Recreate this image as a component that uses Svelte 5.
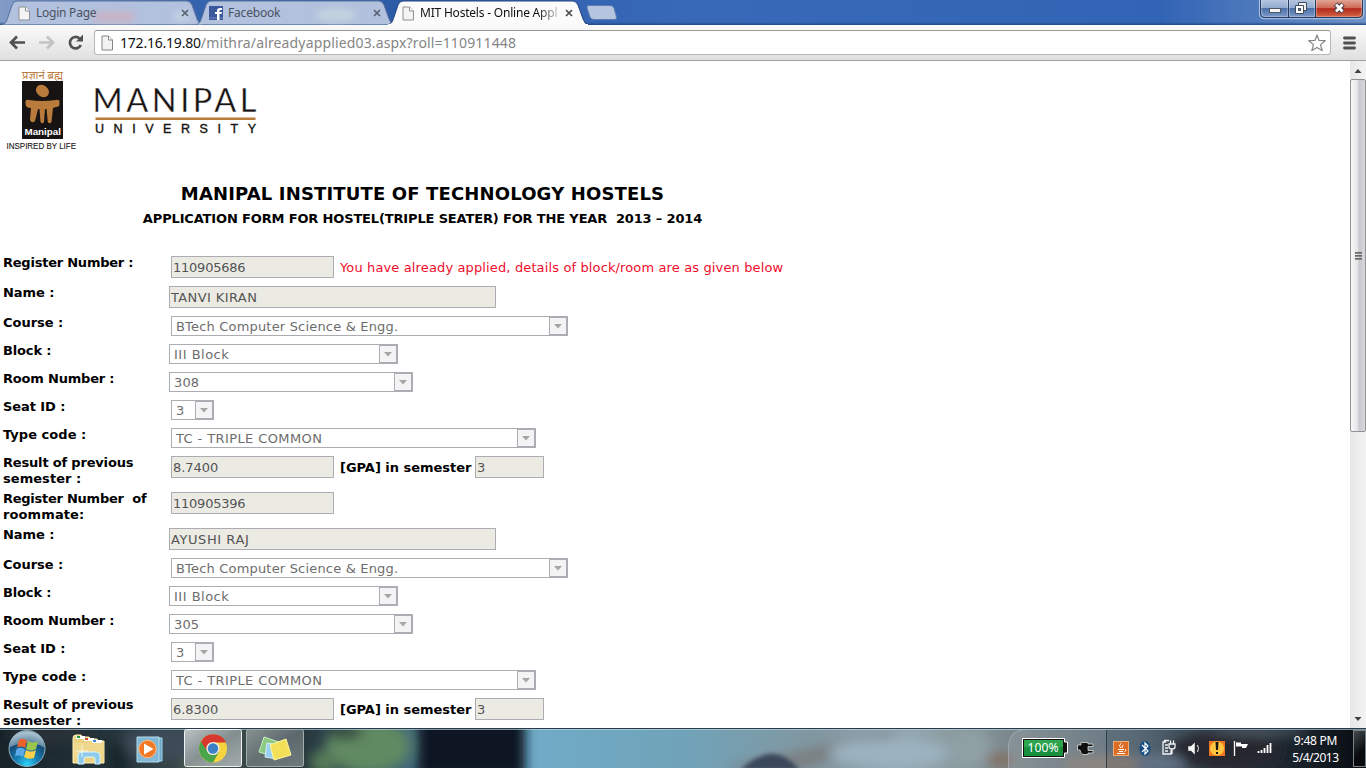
<script>
  const person = (name, room, gpa) => [
    { h: 30, label: [['Name :', 51]], kind: 'input', x: 169, w: 327, value: name[0], tw: name[1] },
    { h: 28, label: [['Course :', 60]], kind: 'select', x: 171, w: 397, value: 'BTech Computer Science & Engg.', tw: 222 },
    { h: 28, label: [['Block :', 48]], kind: 'select', x: 169, w: 229, value: 'III Block', tw: 55 },
    { h: 28, label: [['Room Number :', 111]], kind: 'select', x: 169, w: 244, value: room, tw: 25 },
    { h: 28, label: [['Seat ID :', 62]], kind: 'select', x: 171, w: 43, value: '3', tw: 8 },
    { h: 28, label: [['Type code :', 83]], kind: 'select', x: 171, w: 365, value: 'TC - TRIPLE COMMON', tw: 146 },
    { h: 36, label: [['Result of previous', 130], ['semester :', 78]], kind: 'input', x: 171, w: 163, value: gpa, tw: 45, gpa: true }
  ];
  const rows = [
    { h: 30, label: [['Register Number :', 130]], kind: 'input', x: 171, w: 163, value: '110905686', tw: 72, note: true },
    ...person(['TANVI KIRAN', 86], '308', '8.7400'),
    { h: 36, label: [['Register Number  of', 143], ['roommate:', 81]], kind: 'input', x: 171, w: 163, value: '110905396', tw: 72 },
    ...person(['AYUSHI RAJ', 78], '305', '6.8300')
  ];
  const tabs = [
    { title: 'Login Page', tw: 60, w: 200 },
    { title: 'Facebook', tw: 52, w: 198, fb: true },
    { title: 'MIT Hostels - Online Appl', tw: 137, w: 200, active: true }
  ];
  // Spreads the letters of a line so that it fills the given width.
  function fit(node, width) {
    const n = node.textContent.length;
    const natural = node.getBoundingClientRect().width;
    node.style.letterSpacing = (width + 0.3 - natural) / n + 'px';
  }
</script>

{#snippet page()}
  <svg class="doc" width="13" height="15" viewBox="0 0 13 15"><path d="M1 1H7.500L11.500 5V14H1Z" fill="#f4f4f4" stroke="#909090"/><path d="M7.500 1V5H11.500" fill="#fff" stroke="#909090"/></svg>
{/snippet}

<div class="screen">
  <header class="strip">
    {#each tabs as t}
      <div class="tab" class:active={t.active} class:fb={t.fb} style:width="{t.w}px">
        <svg class="shape" width={t.w} height="25" viewBox="0 0 {t.w} 25">
          <path d="M0 24.500C4 24 4.500 21 6 17L10 5Q11.500 1 15 1H{t.w - 15}Q{t.w - 12} 1 {t.w - 10} 5L{t.w - 5} 19Q{t.w - 3} 24.500 {t.w} 24.500" fill={t.active ? '#fbfbfb' : '#b2c1dd'} stroke={t.active ? '#27467e' : '#5a729d'} />
          {#if t.active}<rect width={t.w} height="2" y="24" fill="#fafafa" />
          {:else if t.fb}<ellipse class="glow" cx="140" cy="15" rx="20" ry="7" fill="#c2d2de" />
          {:else}<g class="glow"><rect x="92" y="12" width="40" height="10" fill="#c9b3c6" /><rect x="172" y="11" width="16" height="10" fill="#c3d2e4" /></g>{/if}
        </svg>
        {#if t.fb}
          <svg class="doc" width="14" height="14" viewBox="0 0 14 14"><rect width="14" height="14" fill="#3a589b"/><path d="M8 14V8H6V6H8V4.500Q8 2 11 2H13V4H11.500Q10.500 4 10.500 5V6H13L12.500 8H10.500V14" fill="#fff"/><path d="M0 12H8M10.500 12H14" stroke="#7188bb"/></svg>
        {:else}{@render page()}{/if}
        <span class="tabtext"><span use:fit={t.tw}>{t.title}</span></span>
        <svg class="close" width="8" height="8" viewBox="0 0 8 8"><path d="M1 1L7 7M7 1L1 7" stroke={t.active ? '#4c4c4c' : '#5a6272'} stroke-width="1.700"/></svg>
      </div>
    {/each}
    <svg class="newtab" width="32" height="15" viewBox="0 0 32 15"><path d="M3 .5H24Q27 .5 28 3L30.500 12Q31 14.500 28.500 14.500H8Q5 14.500 4 12L1 3Q.3 .5 3 .5" fill="#b5c5df" stroke="#5d7cb2"/></svg>
    <svg class="winbtns" width="106" height="20" viewBox="0 0 106 20">
      <defs>
        <linearGradient id="wb" x2="0" y2="1"><stop stop-color="#b8c8e0"/><stop offset=".46" stop-color="#91aad0"/><stop offset=".5" stop-color="#4d70a8"/><stop offset="1" stop-color="#7e9dcc"/></linearGradient>
        <linearGradient id="wr" x2="0" y2="1"><stop stop-color="#e2a394"/><stop offset=".42" stop-color="#cf6b57"/><stop offset=".48" stop-color="#b42a1b"/><stop offset="1" stop-color="#d56a48"/></linearGradient>
      </defs>
      <path d="M1 -1V14Q1 18 5 18H99Q104 18 104 14V-1" fill="url(#wb)"/>
      <path d="M56 0H104V14Q104 18 99 18H56Z" fill="url(#wr)"/>
      <path d="M1.500 0V13Q1.500 17.500 6 17.500H99Q103.500 17.500 103.500 13V0M29.500 0V17M56.500 0V17" fill="none" stroke="#243b64"/>
      <path d="M.5 0V14Q.5 18.700 5 18.700H99Q104.700 18.700 104.700 14V0" fill="none" stroke="#c8d8ee" stroke-width=".8"/>
      <path d="M2.700 0V13Q2.700 16.400 6 16.400H28.400V0M30.600 0V16.400H55.400V0M57.600 0V16.400H99Q102.400 16.400 102.400 13V0" fill="none" stroke="#fff" stroke-opacity=".4" stroke-width=".8"/>
      <rect x="10.500" y="8.500" width="11" height="4" fill="#f5f5f5" stroke="#4f5565"/>
      <path d="M39.500 2.500H47.500V10.500H39.500Z" fill="#eee" stroke="#454c5c"/><path d="M36.500 5.500H44.500V13.500H36.500Z" fill="#fff" stroke="#454c5c"/><rect x="39.500" y="8.500" width="2" height="2" fill="#7797c8" stroke="#454c5c"/>
      <path d="M76.500 4L84 12M84 4L76.500 12" stroke="#54424a" stroke-width="5"/><path d="M77 4.500L83.500 11.500M83.500 4.500L77 11.500" stroke="#fff" stroke-width="2.600"/>
    </svg>
  </header>

  <div class="toolbar">
    <svg width="94" height="35" viewBox="0 0 94 35">
      <g fill="none" stroke-width="2.700"><path d="M11 17.500H25M17 11.500L11 17.500L17 23.500" stroke="#505050"/><path d="M39 17.500H52M47 11.500L53 17.500L47 23.500" stroke="#c3c3c3"/>
      <path d="M79.500 13.500A5.700 5.700 0 1 0 80.800 20" stroke="#505050"/></g><path d="M83 9.500V16.500H76Z" fill="#505050"/>
    </svg>
    <div class="omni">
      <svg width="13" height="16" viewBox="0 0 13 16"><path d="M1 1H7.500L11.500 5V15H1Z" fill="#f3f3f3" stroke="#858585"/><path d="M7.500 1V5H11.500" fill="#fff" stroke="#858585"/></svg>
      <div class="url"><span use:fit={80.500}>172.16.19.80</span><span class="path" use:fit={315}>/mithra/alreadyapplied03.aspx?roll=110911448</span></div>
      <svg class="star" width="18" height="18" viewBox="0 0 18 18"><path d="M9 1L11 6.500L17.200 6.700L12.500 10.600L14.200 16.600L9 13.400L3.800 16.600L5.500 10.600L.8 6.700L7 6.500Z" fill="#fff" stroke="#858585" stroke-width="1.200" stroke-linejoin="round"/></svg>
    </div>
    <svg class="menu" width="13" height="14" viewBox="0 0 13 14"><path d="M1.500 2H11.500M1.500 7H11.500M1.500 12H11.500" stroke="#505050" stroke-width="2.800" stroke-linecap="round"/></svg>
  </div>

  <div class="view">
    <main>
      <svg class="logo" width="270" height="100" viewBox="0 0 270 100">
        <text x="22" y="18" textLength="41" lengthAdjust="spacingAndGlyphs" font-size="11" fill="#b77a3c" font-family="Noto Sans, Noto Sans Devanagari, sans-serif">प्रज्ञानं ब्रह्म</text>
        <rect x="22" y="20" width="41" height="58" fill="#171312"/>
        <g fill="#b97b3c"><ellipse cx="42.500" cy="30" rx="7" ry="5.700" transform="rotate(40 42.500 30)"/>
        <path d="M29 39Q42 41 56 39Q60 38 59.500 42Q60 46 56 46L53 47L51.500 61Q49.500 63.500 47.800 61L46.500 48H45L44 61Q42 63.500 40.500 61L39.500 48H38L35 60Q32 63 30 59L31 47Q25 47 25.500 42Q25 38 29 39"/></g>
        <g font-family="Liberation Sans, Arial, sans-serif" fill="#171312">
          <text x="24.500" y="73.500" textLength="36.500" lengthAdjust="spacingAndGlyphs" font-size="9.500" font-weight="bold" fill="#fff">Manipal</text>
          <text x="6.500" y="87.500" textLength="69.500" lengthAdjust="spacingAndGlyphs" font-size="8.500" stroke="#171312" stroke-width=".1">INSPIRED BY LIFE</text>
          <text x="92.500" y="50.500" textLength="164" font-family="Lato, sans-serif" font-size="32.500" stroke="#fff" stroke-width=".35">MANIPAL</text>
          <rect x="95.500" y="56.500" width="160" height="2.500" fill="#b97b3c"/>
          <text x="95" y="72" textLength="161" font-size="12.500" stroke="#171312" stroke-width=".4">UNIVERSITY</text>
        </g>
      </svg>
      <div class="headings">
        <h1><span use:fit={483}>MANIPAL INSTITUTE OF TECHNOLOGY HOSTELS</span></h1>
        <h2><span use:fit={559}>APPLICATION FORM FOR HOSTEL(TRIPLE SEATER) FOR THE YEAR&nbsp; 2013 – 2014</span></h2>
      </div>
      <form>
        {#each rows as r}
          <div class="row" style:height="{r.h}px">
            <div class="label" style:width="{r.x - 3}px">{#each r.label as l}<div><span use:fit={l[1]}>{l[0]}</span></div>{/each}</div>
            <div class={r.kind} style:width="{r.w}px">
              <span use:fit={r.tw}>{r.value}</span>
              {#if r.kind === 'select'}<i class="arrow"><svg width="8" height="5" viewBox="0 0 8 5"><path d="M0 0H8L4 4.500Z" fill="#a6a6a6"/></svg></i>{/if}
            </div>
            {#if r.note}<div class="note"><span use:fit={443}>You have already applied, details of block/room are as given below</span></div>{/if}
            {#if r.gpa}<div class="gpa"><span use:fit={131}>[GPA] in semester</span></div><div class="input sem">3</div>{/if}
          </div>
        {/each}
      </form>
    </main>
    <div class="scroll">
      <div class="cap"><svg width="8" height="5" viewBox="0 0 8 5"><path d="M0.500 5H7.500L4 1Z" fill="#404040"/></svg></div>
      <div class="thumb"><i></i><i></i><i></i></div>
      <div class="cap bottom"><svg width="8" height="5" viewBox="0 0 8 5"><path d="M0.500 0H7.500L4 4Z" fill="#404040"/></svg></div>
    </div>
  </div>

  <footer>
    <svg class="wall" width="1366" height="40" viewBox="0 0 1366 40" preserveAspectRatio="none">
      <defs>
        <filter id="soft" x="-10%" y="-50%" width="120%" height="200%"><feGaussianBlur stdDeviation="6"/></filter>
        <linearGradient id="sky"><stop stop-color="#172329"/><stop offset=".09" stop-color="#27363d"/><stop offset=".16" stop-color="#42514e"/><stop offset=".22" stop-color="#27363b"/><stop offset=".375" stop-color="#5b9bb9"/><stop offset=".39" stop-color="#70abc7"/><stop offset=".5" stop-color="#70a3b9"/><stop offset=".6" stop-color="#82979f"/><stop offset=".66" stop-color="#95a9b4"/><stop offset=".7" stop-color="#8a9a9d"/><stop offset=".76" stop-color="#738087"/><stop offset=".83" stop-color="#596a76"/><stop offset=".91" stop-color="#27333f"/><stop offset="1" stop-color="#080c11"/></linearGradient>
      </defs>
      <rect width="1366" height="40" fill="url(#sky)"/>
      <g filter="url(#soft)">
        <ellipse cx="368" cy="18" rx="42" ry="27" fill="#608a62"/><ellipse cx="345" cy="4" rx="18" ry="8" fill="#394e42"/><ellipse cx="324" cy="34" rx="14" ry="12" fill="#557a58"/>
        <rect x="418" y="-15" width="107" height="65" fill="#101720"/>
        <ellipse cx="50" cy="5" rx="42" ry="10" fill="#293338"/><ellipse cx="160" cy="16" rx="40" ry="17" fill="#3d4c59"/><ellipse cx="200" cy="38" rx="18" ry="6" fill="#5f715b"/><ellipse cx="118" cy="32" rx="10" ry="20" fill="#15282a"/>
        <path d="M720 40L870 8L910 2L800 42Z" fill="#7c7f82"/><ellipse cx="890" cy="25" rx="60" ry="14" fill="#9bb2c0"/><ellipse cx="970" cy="20" rx="20" ry="20" fill="#8fa0a4"/>
        <ellipse cx="1000" cy="32" rx="14" ry="7" fill="#866e60"/><ellipse cx="1110" cy="36" rx="50" ry="8" fill="#867a73"/><ellipse cx="1225" cy="23" rx="56" ry="19" fill="#25262e"/><ellipse cx="1160" cy="35" rx="25" ry="8" fill="#647489"/><ellipse cx="1260" cy="3" rx="50" ry="4" fill="#54616b"/>
      </g>
      <path d="M740 42Q758 26 772 26Q786 26 800 42" fill="#344156" opacity=".9" style="filter:blur(2px)"/>
      <rect width="1366" height="1" fill="#293a48"/><rect y="1" width="1366" height="1" fill="#c0dce8" opacity=".65"/>
    </svg>
    <svg class="apps" width="310" height="40" viewBox="0 0 310 40">
      <defs><radialGradient id="orb" cx=".5" cy=".95" r=".9"><stop stop-color="#2dd5fa"/><stop offset=".35" stop-color="#1980b5"/><stop offset=".7" stop-color="#154e78"/><stop offset="1" stop-color="#8caabd"/></radialGradient><linearGradient id="btn" x2="1" y2="1"><stop stop-color="#d3d8d8" stop-opacity=".85"/><stop offset=".5" stop-color="#9ba4a7" stop-opacity=".75"/><stop offset="1" stop-color="#c5cdcc" stop-opacity=".75"/></linearGradient></defs>
      <circle cx="27" cy="20.500" r="18" fill="url(#orb)" stroke="#8faebb"/><path d="M10 19Q11 4 27 4Q43 4 44 19Q27 11 10 19" fill="#fff" opacity=".32"/>
      <path d="M19 12Q23 9.500 27 12.500L25 20Q21 17.500 17 19.500Z" fill="#ef612b"/><path d="M28 13Q33 16 38 13L36 21Q31 24 26 21Z" fill="#99c64b"/><path d="M16.500 21Q21 18.500 25 21.500L23 29Q19 26.500 15 28.500Z" fill="#5ca9e8"/><path d="M26 22Q31 25 36 22L34 30Q28 32 24 29Z" fill="#ffd04a"/>
      <path d="M73 35V10Q73 7 76 7H81L83 9H89L91 11H97L98 13H104V35Z" fill="#ecd384" stroke="#fff1b5"/><path d="M76 8H85V11H76M84 10H94V13H84M92 12H102V15H92" fill="#fff"/><path d="M77 8H80V10H77" fill="#219530"/><path d="M85 10H88V12H85" fill="#d34333"/><path d="M93 12H96V14H93" fill="#3589d8"/><path d="M74 15H104V30H74Z" fill="#f0d98d"/><path d="M78 36V28Q78 24 83 24H95Q100 24 100 28V36H95V31Q95 29 93 29H86Q84 29 84 31V36Z" fill="#8ecbea" stroke="#daf4ff"/><path d="M82 17V29M76 23H88" stroke="#fff" opacity=".75"/>
      <path d="M143 10H162V33H143Z" fill="#6ba9c9" stroke="#a8d6ec"/><path d="M137 9H159V34H137Z" fill="#82b7d5" stroke="#b4dded"/><circle cx="147.500" cy="21" r="8.700" fill="#f17925" stroke="#ffbd83"/><path d="M144 15.500V26.500L153.500 21Z" fill="#fff"/>
      <rect x="184.500" y="1.500" width="57" height="37" rx="2" fill="url(#btn)" stroke="#eff3f1"/><rect x="246.500" y="1.500" width="57" height="37" rx="2" fill="url(#btn)" fill-opacity=".6" stroke="#a1afaa"/>
      <circle cx="213" cy="20.500" r="14" fill="#f5d43f"/><path d="M200.900 13.500A14 14 0 0 0 213 34.500L219 24L213 20.500Z" fill="#4aa449"/><path d="M201 13.500A14 14 0 0 1 226 14.500H213Q208 16 207 23Z" fill="#d8382e"/><circle cx="213" cy="20.500" r="6.600" fill="#f0f0e7"/><circle cx="213" cy="20.500" r="5.200" fill="#3c80c5"/>
      <path d="M264 9L279 14L275 29L259 24Z" fill="#8bc982" stroke="#c6ebbc"/><path d="M267 15L279 17L277 31L265 29Z" fill="#9bd1f0" stroke="#d5edf8"/><path d="M270 17L286 11L291 27L274 32Z" fill="#f4df59" stroke="#fff6a2"/>
    </svg>
    <div class="tray">
      <svg width="270" height="40" viewBox="0 0 270 40">
        <path d="M.5 40V17Q2 2 17 1.500H98.500V40" fill="#fff" fill-opacity=".09" stroke="#aebbc1" stroke-opacity=".6"/><path d="M98.500 2V40" stroke="#303e49"/>
        <path d="M14.500 10.500H56.500V14H59.500V25H56.500V29.500H14.500Z" fill="#111" stroke="#fff"/><rect x="16" y="12" width="39" height="16" fill="#188f3e"/><rect x="16" y="12" width="39" height="7" fill="#2da64e"/>
        <text x="19.500" y="24" textLength="31" lengthAdjust="spacingAndGlyphs" fill="#fff" font-family="Noto Sans, sans-serif" font-size="12">100%</text>
        <path d="M69.500 19V17H73V14.500H80V16H85V18.500H80V22.500H85V25H80V26.500H75Q72 25 72 22H69.500Z" fill="#101010" stroke="#ddd" stroke-width=".8"/>
        <rect x="105.500" y="13.500" width="15" height="14" fill="#dc6b24" stroke="#f2ac75"/><path d="M113.500 15Q110 17.500 113 20M115.500 17Q113 18 114.500 20M110 21.500H116M111 23.500H115M109 25.500H117M117 21.500Q119.500 22 116.500 23.500" fill="none" stroke="#fff"/>
        <ellipse cx="137" cy="20.500" rx="5.500" ry="7.500" fill="#164b83"/><path d="M134 17L140 23L137 26V15L140 18L134 24" fill="none" stroke="#fff" stroke-width="1.200"/>
        <path d="M158 14H155V26H163V22M156 12.500H161M157 17H160M157 20H160M157 23H160M161 16H167V19Q167 21 164 21Q161 21 161 19ZM162.500 12.500V16M165.500 12.500V16M164 21V26" fill="none" stroke="#f1f1f1" stroke-width="1.300"/>
        <path d="M180 18H183L187 14V27L183 23H180Z" fill="#f7f7f7" stroke="#333" stroke-width=".5"/><path d="M189.500 17Q191.500 20.500 189.500 24" fill="none" stroke="#eee"/>
        <rect x="201" y="13" width="16" height="15" fill="#f27621"/><circle cx="209" cy="20.500" r="7" fill="#ffc53f"/><path d="M207.500 14H210.500L210 22H208ZM208 24H210V26H208Z" fill="#181818"/>
        <path d="M226.500 13V28" stroke="#fff" stroke-width="1.300"/><path d="M228 14.500H233V16H240L238 20H234V18.500H228Z" fill="#fff"/>
        <path d="M250.500 23V25M253.500 22V25M256.500 20V25M259.500 17V25M262.500 15V25" stroke="#fff" stroke-width="1.800"/>
      </svg>
      <div class="clock"><span use:fit={43}>9:48 PM</span><span use:fit={46}>5/4/2013</span></div>
      <div class="desk"></div>
    </div>
  </footer>
</div>

<style>
  :global(body) { margin: 0; overflow: hidden; }
  .screen { width: 1366px; height: 768px; display: flex; flex-direction: column; overflow: hidden; background: #fff; font: 13px/16px "DejaVu Sans", Verdana, sans-serif; }
  svg { display: block; flex-shrink: 0; }
  span { white-space: pre; display: inline-block; }
  .strip { position: relative; height: 25px; flex: none; display: flex; padding-left: 2px; background: linear-gradient(#fff0 22px, #234b89), linear-gradient(90deg, #829cc6, #3564af 14%, #2d5ca7 30%, #3869b9 50%, #3264b5 85%, #6e91c4); font: 12px/16px "Noto Sans", sans-serif; }
  .tab { position: relative; height: 25px; display: flex; align-items: center; box-sizing: border-box; padding: 1px 13px 0 16px; margin-right: -6px; flex: none; color: #4b5261; }
  .tab.fb { padding-left: 13px; }
  .tab.active { color: #111; z-index: 2; margin-right: -2px; padding: 1px 15px 0 14px; }
  .glow { filter: blur(3px); }
  .shape { position: absolute; left: 0; top: 0; }
  .doc, .tabtext, .close { position: relative; }
  .tabtext { flex: 1; overflow: hidden; margin-left: 5px; }
  .active .tabtext { mask-image: linear-gradient(90deg, #000 118px, #0003 138px); }
  .newtab { margin-top: 5px; }
  .winbtns { position: absolute; right: 1px; top: 0; }
  .toolbar { height: 36px; flex: none; box-sizing: border-box; display: flex; align-items: center; background: linear-gradient(#fafafa, #e0e0e0); border-bottom: 1px solid #a1a1a1; }
  .omni { width: 1237px; height: 25px; box-sizing: border-box; border: 1px solid #b7b7b7; border-top-color: #999; border-radius: 3px; background: #fff; display: flex; align-items: center; padding: 0 4px 0 6px; }
  .url { margin-left: 6px; flex: 1; color: #111; font: 14px/20px "Noto Sans", sans-serif; display: flex; }
  .path { color: #858585; }
  .menu { margin-left: 12px; }
  .view { height: 667px; flex: none; display: flex; overflow: hidden; }
  main { width: 1350px; height: 667px; overflow: hidden; flex: none; }
  .headings { width: 845px; height: 95px; box-sizing: border-box; padding-top: 22px; text-align: center; }
  h1 { margin: 0; font-size: 18px; line-height: 22px; }
  h2 { margin: 3px 0 0; font-size: 13px; line-height: 22px; }
  .row { display: flex; align-items: flex-start; padding-left: 3px; }
  .label { flex: none; font-weight: bold; margin-top: -1px; color: #000; }
  .input { height: 22px; flex: none; box-sizing: border-box; border: 1px solid #abadb3; background: #ebebe4; color: #545454; padding: 3px 1px 0; }
  .select { height: 20px; flex: none; box-sizing: border-box; border: 1px solid #abadb3; background: #fff; color: #6d6d6d; padding-left: 4px; display: flex; justify-content: space-between; line-height: 20px; }
  .arrow { width: 18px; height: 18px; box-sizing: border-box; border: 1px solid #abadb3; border-right-width: 1px; background: #f4f4f4; display: flex; align-items: center; justify-content: center; }
  .note { margin: 4px 0 0 6px; color: #f00d2c; }
  .gpa { margin: 4px 0 0 6px; width: 135px; font-weight: bold; }
  .sem { width: 69px; }
  .scroll { width: 16px; height: 667px; display: flex; flex-direction: column; background: linear-gradient(90deg, #e7e7e7, #f3f3f3); }
  .cap { height: 18px; display: flex; align-items: center; justify-content: center; }
  .thumb { height: 353px; box-sizing: border-box; border: 1px solid #929292; border-radius: 2px; background: linear-gradient(90deg, #f8f8f8, #e5e5e7 45%, #c8c8ce 60%, #d8d8dc); display: flex; flex-direction: column; gap: 1px; align-items: center; justify-content: center; }
  .thumb i { width: 7px; height: 2px; background: linear-gradient(#555, #999); }
  .bottom { margin-top: auto; }
  footer { position: relative; height: 40px; display: flex; justify-content: space-between; flex: none; }
  .wall { position: absolute; inset: 0; }
  .apps { position: relative; }
  .tray { position: relative; width: 358px; display: flex; color: #fff; font: 12px/17px "Noto Sans", sans-serif; }
  .clock { width: 75px; display: flex; flex-direction: column; align-items: center; padding-top: 4px; margin-left: 0; }
  .desk { width: 13px; height: 37px; margin-top: 2px; box-sizing: border-box; border: 1px solid #778087; background: linear-gradient(135deg, #454b50, #090b0e 60%); }
</style>
